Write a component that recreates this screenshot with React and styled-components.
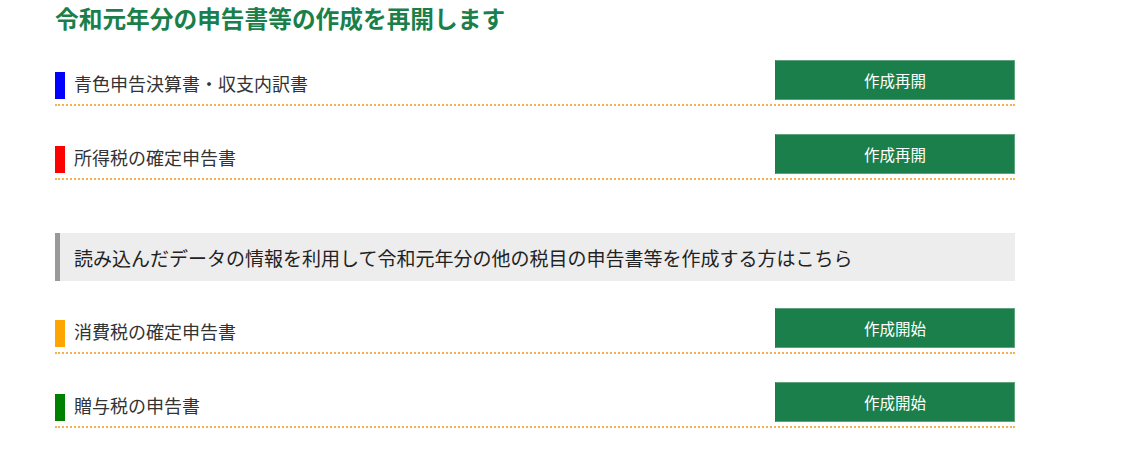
import React from 'react';
import styled, { createGlobalStyle } from 'styled-components';

const GlobalStyle = createGlobalStyle`
  body {
    margin: 0;
    background: #fff;
    font-family: 'Noto Sans CJK JP', 'Noto Sans', sans-serif;
    color: #333;
  }
`;

const Page = styled.div`
  width: 960px;
  padding-left: 55px;
`;

const Title = styled.h2`
  margin: 0;
  font-size: 23.7px;
  line-height: 36px;
  font-weight: bold;
  color: #1a7f4b;
`;

const Row = styled.div`
  display: flex;
  justify-content: space-between;
  align-items: flex-end;
  margin-top: ${(p) => p.$gap}px;
  padding-bottom: 4px;
  border-bottom: 2px dotted #f6b04d;
`;

const Label = styled.div`
  display: flex;
  align-items: flex-end;
  gap: 9px;
  font-size: 18px;
  line-height: 27px;
  color: #333;
  margin-bottom: 1px;
`;

const LabelText = styled.span`
  padding-bottom: 2px;
`;

const Marker = styled.span`
  width: 10px;
  height: 27px;
  background: ${(p) => p.$color};
`;

const Button = styled.button`
  width: 240px;
  height: 40px;
  box-sizing: border-box;
  background: #1a7f4b;
  border: 1px solid #5fa37e;
  border-left-color: #1a7f4b;
  color: #fff;
  font-family: 'Noto Sans CJK JP', sans-serif;
  font-size: 15.5px;
  cursor: pointer;
`;

const Notice = styled.div`
  margin-top: 53px;
  height: 48px;
  box-sizing: border-box;
  display: flex;
  align-items: center;
  padding-left: 14px;
  background: #ededed;
  border-left: 5px solid #999;
  font-size: 19px;
  color: #222;
`;

function FormRow({ color, label, action, gap }) {
  return (
    <Row $gap={gap}>
      <Label>
        <Marker $color={color} />
        <LabelText>{label}</LabelText>
      </Label>
      <Button>{action}</Button>
    </Row>
  );
}

export default function App() {
  return (
    <>
      <GlobalStyle />
      <Page>
        <Title>令和元年分の申告書等の作成を再開します</Title>
        <FormRow gap={24} color="#0000ff" label="青色申告決算書・収支内訳書" action="作成再開" />
        <FormRow gap={28} color="#ff0000" label="所得税の確定申告書" action="作成再開" />
        <Notice>読み込んだデータの情報を利用して令和元年分の他の税目の申告書等を作成する方はこちら</Notice>
        <FormRow gap={27} color="#ffa500" label="消費税の確定申告書" action="作成開始" />
        <FormRow gap={28} color="#008000" label="贈与税の申告書" action="作成開始" />
      </Page>
    </>
  );
}
